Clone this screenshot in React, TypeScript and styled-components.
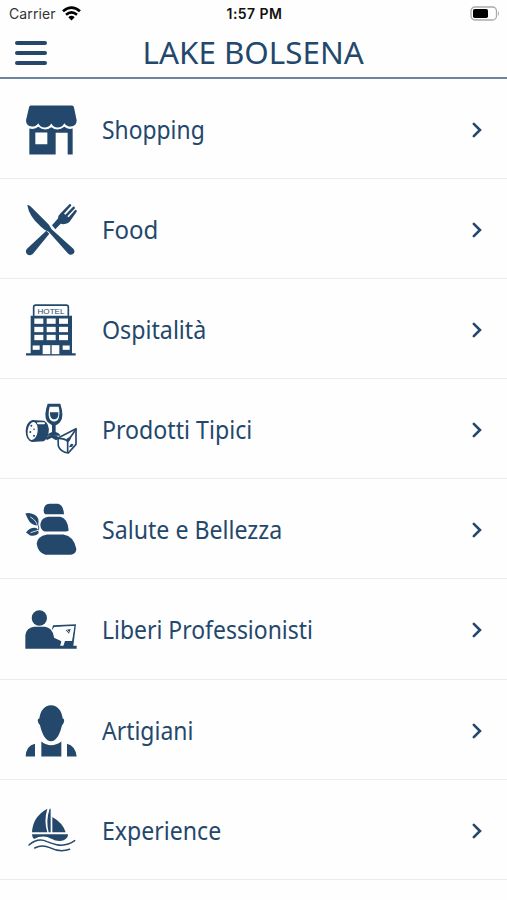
import React from "react";
import styled, { createGlobalStyle } from "styled-components";

const NAVY = "#24486c";

const GlobalStyle = createGlobalStyle`
  * { box-sizing: border-box; }
  body { margin: 0; background: #fefefe; color: ${NAVY}; font-family: "Noto Sans", sans-serif; }
`;

const Screen = styled.div`
  width: 507px;
  height: 900px;
  overflow: hidden;
  background: #fefefe;
`;

const StatusBar = styled.div`
  height: 27px;
  padding: 0 7px 0 9px;
  display: grid;
  grid-template-columns: 1fr auto 1fr;
  align-items: center;
  color: #111;
  font-family: Inter, sans-serif;
  font-size: 14px;
`;

const Carrier = styled.div`
  display: flex;
  align-items: center;
  gap: 6px;
  color: #333;
  font-size: 14px;
  letter-spacing: 0.1px;
`;

const Clock = styled.div`
  font-weight: 600;
  font-size: 14px;
  letter-spacing: 0.45px;
`;

const BatteryIcon = styled.svg`
  justify-self: end;
`;

const Header = styled.header`
  height: 52px;
  padding: 0 15px;
  display: grid;
  grid-template-columns: 32px 1fr 32px;
  align-items: center;
  border-bottom: 2px solid #6d859e;
`;

const MenuButton = styled.button`
  width: 32px;
  height: 24px;
  margin-top: 1px;
  padding: 0;
  border: 0;
  background: none;
  display: flex;
  flex-direction: column;
  justify-content: space-between;
`;

const MenuBar = styled.span`
  width: 32px;
  height: 4px;
  border-radius: 2px;
  background: ${NAVY};
`;

const Title = styled.h1<{ $stretch: number }>`
  margin: -1px 0 0;
  justify-self: center;
  font-size: 31.5px;
  line-height: 40px;
  font-weight: 400;
  white-space: nowrap;
  transform: scaleX(${(p) => p.$stretch});
`;

const List = styled.ul`
  margin: -0.6px 0 0;
  padding: 0;
  list-style: none;
`;

const Row = styled.li`
  height: 100.2px;
  padding: 3px 24px 0 10px;
  display: flex;
  align-items: center;
  border-bottom: 1px solid #ececec;
`;

const RowIcon = styled.svg`
  width: 80px;
  height: 80px;
  flex: none;
  fill: ${NAVY};
  stroke-linejoin: round;
  stroke-linecap: round;
`;

const Label = styled.span<{ $stretch: number }>`
  flex: 1;
  margin-left: 11.5px;
  font-size: 24.5px;
  line-height: 34px;
  white-space: nowrap;
  transform: scaleX(${(p) => p.$stretch});
  transform-origin: left center;
`;

const Chevron = styled.svg`
  flex: none;
  width: 12px;
  height: 18px;
  fill: none;
  stroke: ${NAVY};
  stroke-width: 2.6;
  stroke-linecap: round;
`;

const BG = "#fefefe";

const ShopIcon = () => (
  <g>
    <path d="M62 44H186Q191 44 192 50L200 88Q200 106 182 107Q170 107 163 97Q156 110 143 110Q130 110 124 98Q117 110 104 110Q91 110 85 97Q78 107 66 107Q48 105 48 88L57 50Q58 44 62 44Z" />
    <path d="M58 113Q74 117 85 108Q104 123 124 109Q143 123 163 108Q174 117 188 113V191H173V126H137V191H58ZM76 125V160H112V125Z" fillRule="evenodd" />
  </g>
);

const FoodIcon = () => (
  <g>
    <path d="M109 121L118 130L69 190Q61 197 52 192Q44 183 51 175Z" />
    <path d="M126 104L144 84Q144 75 151 69L178 41Q183 40 184 45L162 70L166 73L190 48Q195 47 195 53L172 77L176 80L196 58Q202 58 200 64L181 91Q174 101 161 101L152 100L136 116Z" />
    <path d="M52 44Q56 42 62 48L111 97Q119 104 125 116L190 175Q197 184 190 190Q181 196 174 189L116 124Q104 120 92 108Q57 77 52 44Z" />
  </g>
);

const HotelIcon = () => (
  <g>
    <path d="M71 75V50Q71 44 77 44H169Q175 44 175 50V75" fill="none" stroke={NAVY} strokeWidth="5" />
    <text x="123" y="70" textAnchor="middle" fontFamily="Liberation Sans" fontSize="24" textLength="81" lengthAdjust="spacingAndGlyphs">HOTEL</text>
    <path d="M62 76H186V188H197V195H48V188H62Z" />
    <g fill={BG}>
      {[84, 109, 133].map((y) =>
        [73, 110, 147].map((x) => <rect key={`${x}-${y}`} x={x} y={y} width="27" height="16" />),
      )}
      <rect x="68" y="165" width="21" height="13" />
      <rect x="158" y="165" width="21" height="13" />
      <rect x="98" y="164" width="23" height="27" />
      <rect x="125" y="164" width="23" height="27" />
    </g>
  </g>
);

const ProduceIcon = () => (
  <g>
    <path d="M67 91L103 93Q119 104 116 127Q114 146 101 155L66 157Q47 151 47 124Q48 98 67 91Z" />
    <ellipse cx="68" cy="124" rx="15" ry="27" fill={BG} transform="rotate(8 68 124)" />
    <circle cx="64" cy="108" r="3" />
    <circle cx="72" cy="119" r="2.5" />
    <circle cx="61" cy="127" r="3" />
    <circle cx="72" cy="138" r="3" />
    <path d="M84 101H102" stroke={BG} strokeWidth="6" fill="none" />
    <path d="M113 42H151Q164 82 150 98Q143 105 137 107V127Q149 131 151 138H111Q115 130 126 127V107Q117 102 111 95Q100 78 113 42Z" />
    <path d="M119 51H146Q152 77 143 91Q133 100 121 91Q112 78 119 51Z" fill={BG} />
    <path d="M120 68H145Q146 84 139 87Q132 91 126 87Q119 82 120 68Z" />
    <path d="M105 145Q128 127 150 145L138 152L125 144L111 151Z" />
    <path d="M144 145L198 117V164L175 190Q151 187 145 169Z" fill={BG} stroke={NAVY} strokeWidth="5" />
    <path d="M144 146Q165 146 173 155L198 119M173 155V188" fill="none" stroke={NAVY} strokeWidth="5" />
    <path d="M169 148L184 138L181 150L173 160ZM177 173Q182 158 190 164L187 171Z" />
  </g>
);

const WellnessIcon = () => (
  <g>
    <path d="M118 42H144Q160 45 162 73H106Q101 72 101 63Q101 44 118 42Z" />
    <path d="M114 81H151Q174 87 176 122Q173 126 162 125H104Q91 120 91 103Q93 85 114 81Z" />
    <path d="M111 134H160Q192 139 199 177Q199 192 183 195H106Q84 189 80 162Q81 139 111 134Z" />
    <path d="M46 71Q57 66 74 75Q90 83 84 107Q68 107 58 95Q53 87 46 71Z" />
    <path d="M48 129Q57 114 74 114Q85 114 86 130Q75 142 59 136Q54 131 48 129Z" />
    <path d="M62 82Q79 91 84 111" fill="none" stroke={BG} strokeWidth="2.5" />
    <path d="M63 128L86 121" fill="none" stroke={BG} strokeWidth="2.5" />
    <path d="M83 102Q88 112 86 120" fill="none" stroke={NAVY} strokeWidth="2.5" />
  </g>
);

const OfficeIcon = () => (
  <g>
    <circle cx="88" cy="85" r="23" />
    <path d="M72 111H105Q126 113 132 141L153 153Q157 160 150 168H184L193 109L133 112L130 122L126 119L129 107L198 104L190 168H200V177H46V137Q48 115 72 111Z" />
    <path d="M132 113L193 110L184 156L165 154L161 166H151L155 155L132 144Q134 130 127 120Z" fill={BG} />
    <path d="M165 154H188L186 169H160ZM167 121L182 118L177 132Z" />
    <path d="M171 121L178 128" fill="none" stroke={BG} strokeWidth="2" />
  </g>
);

const ArtisanIcon = () => (
  <g>
    <path d="M123 44Q153 46 158 84Q164 85 162 94Q160 102 156 104Q145 151 123 152Q101 151 90 104Q84 99 83 90Q83 84 88 84Q93 46 123 44Z" />
    <path d="M94 153Q123 176 154 153V198H94Z" />
    <path d="M75 160V198H47Q48 166 75 160ZM171 160V198H200Q196 166 171 160Z" />
  </g>
);

const SailIcon = () => (
  <g>
    <path d="M112 55Q101 91 112 126H66Q68 79 112 55ZM119 55H122V126H116Q107 91 119 55ZM127 80Q158 97 167 126H127Z" />
    <path d="M66 132H174Q175 143 161 150Q143 155 124 145Q99 132 72 146Q66 141 66 132Z" />
    <path d="M57 164Q84 141 111 154Q126 160 140 163Q169 169 194 151" fill="none" stroke={NAVY} strokeWidth="4.5" />
    <path d="M74 173Q97 162 119 172Q149 187 179 177" fill="none" stroke={NAVY} strokeWidth="4.5" />
  </g>
);

const items = [
  { label: "Shopping", Icon: ShopIcon, stretch: 0.933, top: -2.5 },
  { label: "Food", Icon: FoodIcon, stretch: 0.98, top: -1.5 },
  { label: "Ospitalità", Icon: HotelIcon, stretch: 0.947, top: -1.5 },
  { label: "Prodotti Tipici", Icon: ProduceIcon, stretch: 0.945, top: 1 },
  { label: "Salute e Bellezza", Icon: WellnessIcon, stretch: 0.945, top: 0.5 },
  { label: "Liberi Professionisti", Icon: OfficeIcon, stretch: 0.936, top: 1 },
  { label: "Artigiani", Icon: ArtisanIcon, stretch: 0.937, top: 1.5 },
  { label: "Experience", Icon: SailIcon, stretch: 0.943, top: 2 },
];

export default function App() {
  return (
    <Screen>
      <GlobalStyle />
      <StatusBar>
        <Carrier>
          Carrier
          <svg width="19" height="15" viewBox="0 0 19 15" fill="none" stroke="#000" strokeWidth="2.6">
            <path d="M1 5.3Q9.5 -2.2 18 5.3M4 8.7Q9.5 4 15 8.7" />
            <path d="M6.3 11.2Q9.5 8.4 12.7 11.2L9.5 14.4Z" fill="#000" stroke="none" />
          </svg>
        </Carrier>
        <Clock>1:57 PM</Clock>
        <BatteryIcon width="30" height="15" viewBox="0 0 30 15">
          <rect x="1" y="1" width="25.5" height="13" rx="4" fill="#fff" stroke="#aaa" strokeWidth="1.3" />
          <rect x="3" y="3" width="15" height="9" rx="1.8" fill="#000" />
          <path d="M28 5Q30 7.5 28 10Z" fill="#aaa" />
        </BatteryIcon>
      </StatusBar>
      <Header>
        <MenuButton aria-label="Menu">
          <MenuBar />
          <MenuBar />
          <MenuBar />
        </MenuButton>
        <Title $stretch={0.995}>LAKE BOLSENA</Title>
      </Header>
      <List>
        {items.map(({ label, Icon, stretch, top }) => (
          <Row key={label}>
            <RowIcon viewBox={`0 ${top} 240 240`}>
              <Icon />
            </RowIcon>
            <Label $stretch={stretch}>{label}</Label>
            <Chevron viewBox="0 0 12 18">
              <path d="M2.8 2.8L9 9L2.8 15.2" />
            </Chevron>
          </Row>
        ))}
      </List>
    </Screen>
  );
}
